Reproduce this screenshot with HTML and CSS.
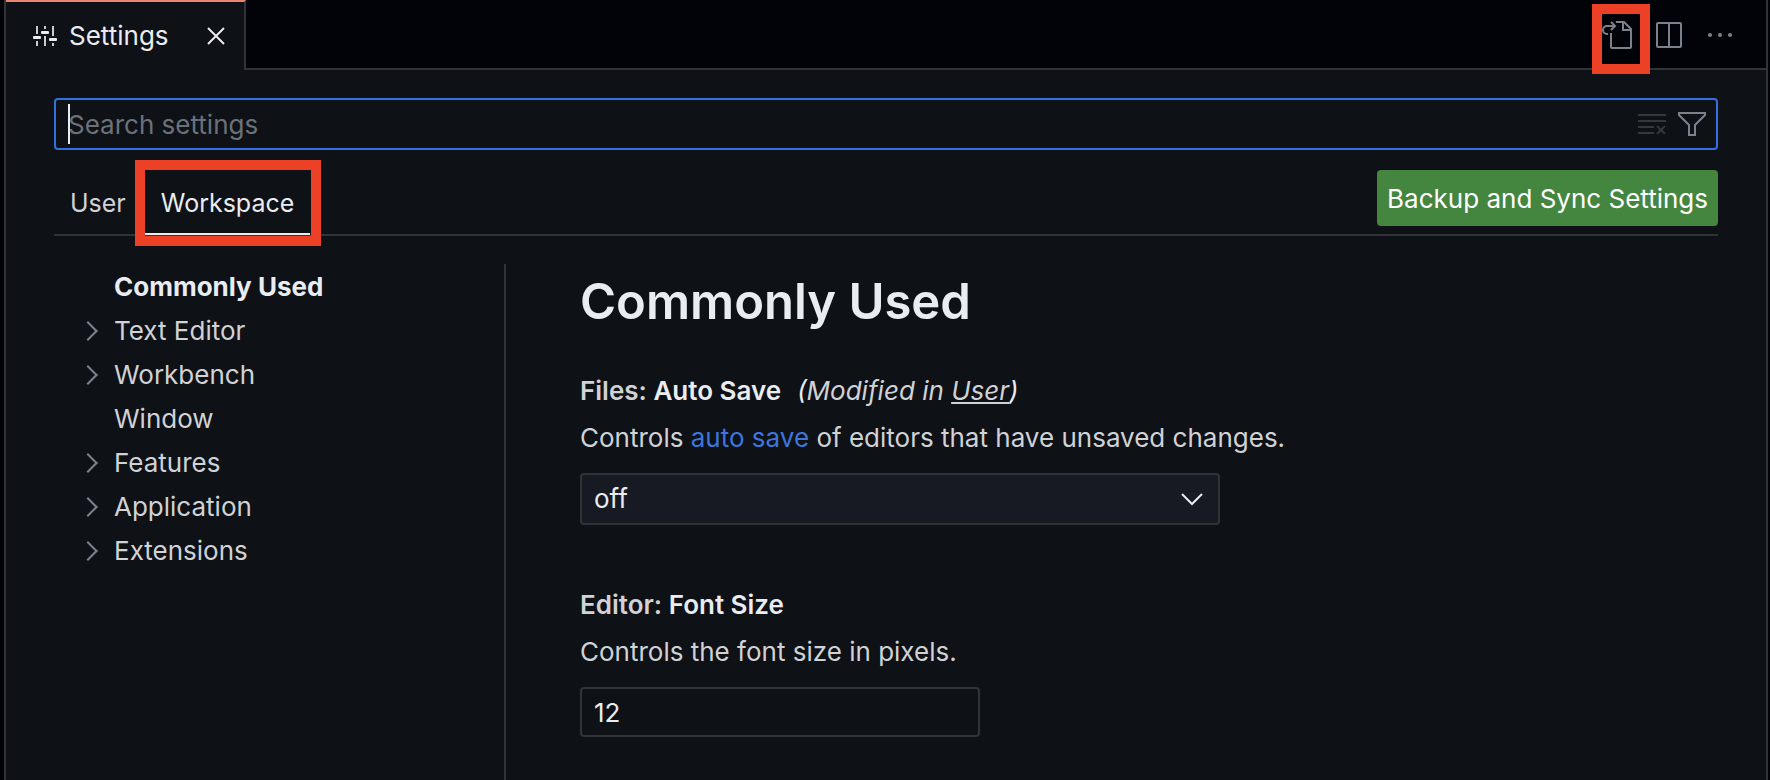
FILE: index.html
```html
<!DOCTYPE html>
<html lang="en">
<head>
<meta charset="utf-8">
<title>Settings</title>
<link rel="stylesheet" href="styles.css">
</head>
<body>
<div class="window">
  <header class="tabbar">
    <div class="editor-tab">
      <svg class="tab-icon" width="24" height="20" viewBox="0 0 24 20" aria-hidden="true">
        <path d="M4 0v8M4 15v5M12 0v3M12 10v10M20 0v10M20 17v3" stroke="currentColor" stroke-width="2" opacity=".85"/>
        <rect x="0" y="10" width="8" height="3" rx="1" fill="currentColor"/>
        <rect x="8" y="5" width="8" height="3" rx="1" fill="currentColor"/>
        <rect x="16" y="12" width="8" height="3" rx="1" fill="currentColor"/>
      </svg>
      <span class="tab-title">Settings</span>
      <button class="icon-button close" aria-label="Close">
        <svg width="18" height="18" viewBox="0 0 18 18"><path d="M1 1l16 16M17 1L1 17" stroke="currentColor" stroke-width="2" fill="none"/></svg>
      </button>
    </div>
    <div class="actions">
      <button class="icon-button marked open-json" aria-label="Open Settings (JSON)">
        <svg width="30" height="28" viewBox="0 0 30 28" fill="none" stroke="currentColor" stroke-width="2">
          <path d="M9 12v14a1 1 0 0 0 1 1h18a1 1 0 0 0 1-1V8l-7-7h-8M21 1v8h8"/>
          <path d="M6 13H5a4 4 0 0 1-4-4 4 4 0 0 1 4-4h8M9 1l4 4-4 4"/>
        </svg>
        <span class="highlight"></span>
      </button>
      <button class="icon-button" aria-label="Split Editor">
        <svg width="26" height="26" viewBox="0 0 26 26" fill="none" stroke="currentColor" stroke-width="2"><rect x="1" y="1" width="24" height="24" rx="1"/><path d="M13 1v24"/></svg>
      </button>
      <button class="icon-button" aria-label="More Actions">
        <svg width="26" height="4" viewBox="-2 0 26 4" fill="currentColor"><circle cx="2" cy="2" r="2"/><circle cx="12" cy="2" r="2"/><circle cx="22" cy="2" r="2"/></svg>
      </button>
    </div>
  </header>

  <main class="settings">
    <div class="search">
      <input class="search-input" type="text" placeholder="Search settings" aria-label="Search settings">
      <span class="caret"></span>
      <button class="icon-button clear" aria-label="Clear Settings Search Input">
        <svg width="28" height="20" viewBox="0 0 28 20" fill="none" stroke="currentColor" stroke-width="2"><path d="M0 1h28M0 7h28M0 13h16M0 19h16M19 12l8 8M27 12l-8 8"/></svg>
      </button>
      <button class="icon-button" aria-label="Filter Settings">
        <svg width="28" height="24" viewBox="0 0 28 24" fill="none" stroke="currentColor" stroke-width="2"><path d="M1 1h26v2L17 13v10h-6V13L1 3z"/></svg>
      </button>
    </div>

    <div class="scope">
      <nav class="scope-tabs" aria-label="Settings scope">
        <button class="scope-tab">User</button>
        <button class="scope-tab selected marked">Workspace<span class="highlight"></span></button>
      </nav>
      <button class="sync">Backup and Sync Settings</button>
    </div>

    <div class="columns">
      <nav class="toc" aria-label="Settings groups">
        <a class="toc-item current" href="#common">Commonly Used</a>
        <a class="toc-item parent" href="#text-editor">Text Editor</a>
        <a class="toc-item parent" href="#workbench">Workbench</a>
        <a class="toc-item" href="#window">Window</a>
        <a class="toc-item parent" href="#features">Features</a>
        <a class="toc-item parent" href="#application">Application</a>
        <a class="toc-item parent" href="#extensions">Extensions</a>
      </nav>

      <section class="group" id="common">
        <h1 class="group-title">Commonly Used</h1>
        <div class="setting">
          <div class="setting-head">
            <label class="setting-label" for="auto-save"><span class="category">Files:</span> Auto Save</label>
            <em class="override">(<span class="category">Modified in <a href="#user">User</a></span>)</em>
          </div>
          <p class="description">Controls <a href="#auto-save">auto save</a> of editors that have unsaved changes.</p>
          <div class="select-box">
            <select class="field" id="auto-save"><option>off</option><option>afterDelay</option><option>onFocusChange</option><option>onWindowChange</option></select>
            <svg class="select-arrow" width="22" height="13" viewBox="0 0 22 13" fill="none" stroke="currentColor" stroke-width="2" aria-hidden="true"><path d="M1 1l10 10L21 1"/></svg>
          </div>
        </div>
        <div class="setting">
          <div class="setting-head">
            <label class="setting-label" for="font-size"><span class="category">Editor:</span> Font Size</label>
          </div>
          <p class="description">Controls the font size in pixels.</p>
          <input class="field number" id="font-size" type="text" inputmode="numeric" value="12">
        </div>
      </section>
    </div>
  </main>
</div>
</body>
</html>
```
FILE: styles.css
```css
:root {
  --bg: #0e1116;
  --dark: #020308;
  --line: #303338;
  --bright: #e9ecf1;
  --text: #d0d2d5;
  --muted: #7c828c;
  --mark: #ec4127;
}

*, *::before { box-sizing: border-box; }

body {
  margin: 0;
  background: var(--dark);
  color: var(--text);
  font: 26px/32px Inter, "Liberation Sans", sans-serif;
}

button, input, select { font: inherit; }

.window {
  display: flex;
  flex-direction: column;
  min-height: 100vh;
  margin: 0 2px 0 4px;
  border: solid var(--line);
  border-width: 0 2px;
  background: var(--bg);
}

.tabbar {
  display: flex;
  justify-content: space-between;
  height: 70px;
  background: linear-gradient(var(--line), var(--line)) bottom / 100% 2px no-repeat var(--dark);
}

.editor-tab {
  display: flex;
  align-items: center;
  width: 240px;
  padding: 0 19px 0 27px;
  border-top: 2px solid #ec8471;
  border-right: 2px solid var(--line);
  background: var(--bg);
  color: var(--bright);
}

.tab-icon { margin-right: 12px; }
.tab-title { flex: 1; }

.icon-button {
  display: flex;
  align-items: center;
  padding: 0;
  border: 0;
  background: none;
  color: var(--muted);
}

.close { color: var(--bright); }

.actions {
  display: flex;
  align-items: center;
  gap: 24px;
  padding: 0 34px 0 0;
}

.marked { position: relative; }

.highlight {
  position: absolute;
  inset: -10px -11px -13px -10px;
  border: 10px solid var(--mark);
  pointer-events: none;
}

.open-json .highlight { inset: -17px -18px -25px -10px; }

.settings {
  display: flex;
  flex: 1;
  flex-direction: column;
  padding: 28px 48px 0;
}

.search {
  position: relative;
  display: flex;
  align-items: center;
  gap: 12px;
  height: 52px;
  padding: 0 10px 0 12px;
  border: 2px solid #3170df;
  border-radius: 4px;
}

.search-input {
  flex: 1;
  min-width: 0;
  padding: 2px 0 0;
  border: 0;
  outline: 0;
  background: none;
  color: var(--bright);
}

.search-input::placeholder { color: #6b717b; opacity: 1; }

.caret {
  position: absolute;
  left: 12px;
  top: 4px;
  width: 2px;
  height: 40px;
  background: var(--bright);
}

.clear { color: #34373c; }

.scope {
  display: flex;
  justify-content: space-between;
  padding: 20px 0 8px;
  border-bottom: 2px solid var(--line);
}

.scope-tabs {
  display: flex;
  gap: 3px;
  margin-bottom: -9px;
  font-size: 25px;
}

.scope-tab {
  padding: 2px 16px 0;
  border: 0;
  border-bottom: 2px solid transparent;
  background: none;
  color: var(--text);
}

.scope-tab.selected { border-color: var(--bright); color: var(--bright); }

.sync {
  height: 56px;
  padding: 2px 10px 0;
  border: 0;
  border-radius: 4px;
  background: #448540;
  color: #fff;
}

.columns { display: flex; flex: 1; padding-top: 28px; }

.toc {
  flex: none;
  width: 452px;
  padding-top: 1px;
  border-right: 2px solid var(--line);
}

.toc-item {
  display: flex;
  align-items: center;
  height: 44px;
  padding-left: 60px;
  color: var(--text);
  text-decoration: none;
}

.toc-item.current { color: var(--bright); font-weight: 700; }

.parent { padding-left: 27px; }

.parent::before {
  content: "";
  width: 14px;
  height: 14px;
  margin-right: 19px;
  border: solid var(--muted);
  border-width: 2px 2px 0 0;
  transform: rotate(45deg);
}

.group { flex: 1; padding: 8px 0 24px 74px; }

.group-title {
  margin: 0 0 43px;
  color: var(--bright);
  font-size: 49px;
  font-weight: 600;
  line-height: 60px;
}

.setting { margin-bottom: 64px; }
.setting:last-child { margin-bottom: 0; }

.setting-head { display: flex; gap: 16px; }

.setting-label { color: var(--bright); font-weight: 600; }
.category { color: var(--text); }
.override { color: var(--bright); }
.override a { color: inherit; }

.description { margin: 15px 0 19px; }
.description a { color: #3c76dd; text-decoration: none; }

.select-box { position: relative; max-width: 640px; }

.field {
  display: block;
  width: 100%;
  height: 52px;
  padding: 0 12px;
  border: 2px solid var(--line);
  border-radius: 4px;
  appearance: none;
  background: #171a22;
  color: var(--bright);
}

.field.number { height: 50px; max-width: 400px; background: var(--bg); }

.select-arrow {
  position: absolute;
  top: 20px;
  right: 17px;
  color: var(--bright);
  pointer-events: none;
}
```
